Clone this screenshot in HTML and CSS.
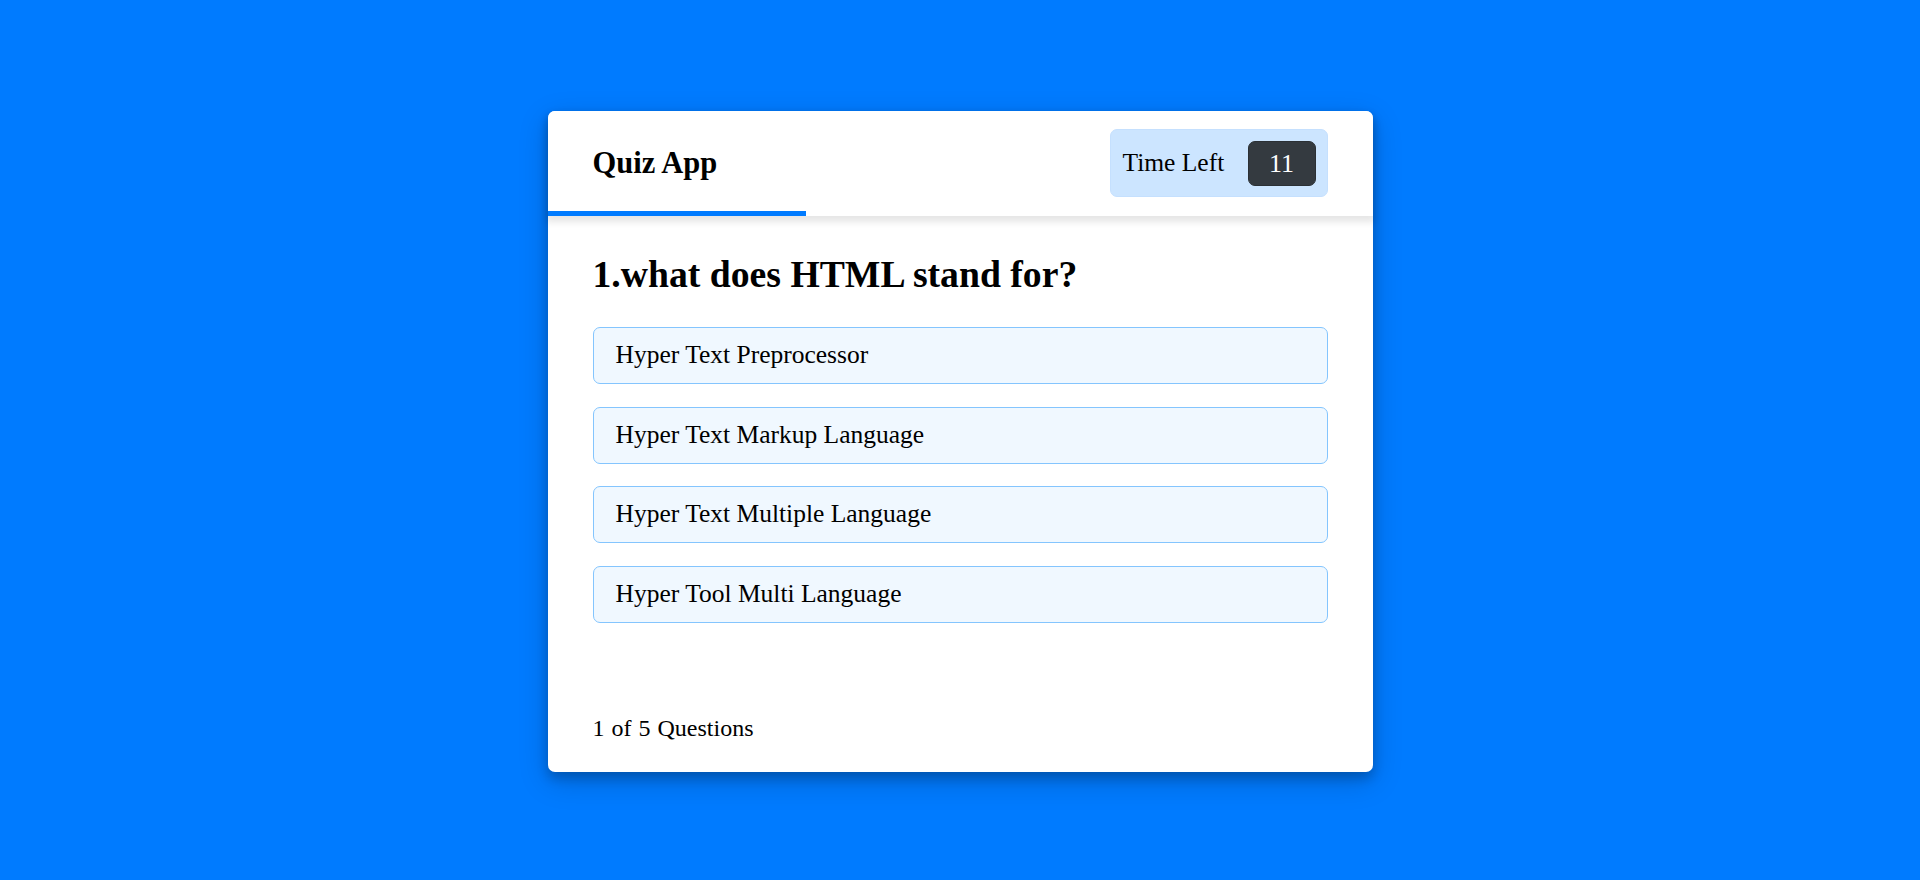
FILE: index.html
```html
<!DOCTYPE html>
<html lang="en">
<head>
<meta charset="utf-8">
<title>Quiz App</title>
<link rel="stylesheet" href="styles.css">
</head>
<body>
  <div class="quiz-box">
    <header class="quiz-header">
      <div class="title">Quiz App</div>
      <div class="timer">
        <div class="time-left-txt">Time Left</div>
        <div class="timer-sec">11</div>
      </div>
      <div class="time-line" style="width: 258px;"></div>
    </header>
    <section class="quiz-section">
      <div class="que-text">1.what does HTML stand for?</div>
      <div class="option-list">
        <div class="option">Hyper Text Preprocessor</div>
        <div class="option">Hyper Text Markup Language</div>
        <div class="option">Hyper Text Multiple Language</div>
        <div class="option">Hyper Tool Multi Language</div>
      </div>
    </section>
    <footer class="quiz-footer">
      <div class="total-que"><span class="tq-item">1</span><span class="tq-item">of</span><span class="tq-item">5</span><span class="tq-item">Questions</span></div>
    </footer>
  </div>
</body>
</html>
```

FILE: styles.css
```css
* {
  box-sizing: border-box;
}

html, body {
  margin: 0;
  padding: 0;
}

body {
  background: #007bff;
  font-family: "Liberation Serif", "Times New Roman", serif;
  color: #000;
  min-height: 100vh;
  display: flex;
  align-items: center;
  justify-content: center;
}

.quiz-box {
  width: 825px;
  margin-top: 2px;
  background: #fff;
  border-radius: 7px;
  box-shadow: 0 6px 12px 0 rgba(0, 0, 0, 0.2), 0 9px 30px 0 rgba(0, 0, 0, 0.19);
}

.quiz-header {
  position: relative;
  z-index: 2;
  height: 105px;
  padding: 0 45px;
  background: #fff;
  border-radius: 7px 7px 0 0;
  display: flex;
  align-items: center;
  justify-content: space-between;
  box-shadow: 0 4.5px 7.5px 1.5px rgba(0, 0, 0, 0.1);
}

.title {
  font-size: 30.5px;
  font-weight: bold;
}

.timer {
  background: #cce5ff;
  border: 1px solid #c5e0fe;
  height: 68px;
  width: 218px;
  padding: 0 11px 0 12px;
  border-radius: 7px;
  display: flex;
  align-items: center;
  justify-content: space-between;
}

.time-left-txt {
  font-size: 25.5px;
}

.timer-sec {
  width: 68px;
  height: 45px;
  line-height: 43px;
  font-size: 26px;
  color: #fff;
  text-align: center;
  background: #343a40;
  border: 1px solid #2b3035;
  border-radius: 7px;
}

.time-line {
  position: absolute;
  left: 0;
  bottom: 0;
  height: 5px;
  background: #007bff;
}

.quiz-section {
  padding: 37.5px 45px 0;
}

.que-text {
  font-size: 37.7px;
  font-weight: bold;
  line-height: 43px;
}

.option-list {
  padding-top: 31px;
  display: flex;
  flex-direction: column;
  gap: 22.5px;
}

.option {
  background: #f0f8ff;
  border: 1px solid #84c5fe;
  border-radius: 7px;
  padding: 11px 22px 13px;
  font-size: 25.5px;
  line-height: 31px;
}

.quiz-footer {
  padding: 91px 45px 30px;
}

.total-que {
  display: flex;
  font-size: 24px;
  line-height: 28px;
}

.tq-item {
  padding: 0 3.5px;
}

.tq-item:first-child {
  padding-left: 0;
}
```
